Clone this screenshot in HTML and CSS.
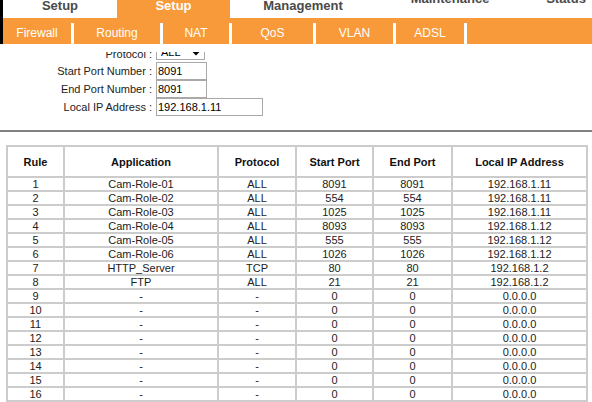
FILE: index.html
```html
<!DOCTYPE html>
<html lang="en">
<head>
  <meta charset="UTF-8" />
  <title>Virtual Server</title>
  <link rel="stylesheet" href="styles.css">
</head>
<body>

  <!-- top navigation -->
  <div class="header">
    <div class="nav">
      <div class="topnav">
        <div class="tab t1">Setup</div>
        <div class="tab t2 active">Setup</div>
        <div class="tab t3">Management</div>
        <div class="tab t4 high">Maintenance</div>
        <div class="tab t5 high">Status</div>
      </div>
      <div class="subnav">
        <a class="sub s1">Firewall</a>
        <a class="sub s2">Routing</a>
        <a class="sub s3">NAT</a>
        <a class="sub s4">QoS</a>
        <a class="sub s5">VLAN</a>
        <a class="sub s6">ADSL</a>
      </div>
    </div>
  </div>

  <!-- rule form -->
  <div class="form">
    <div class="row first">
      <label>Protocol :</label>
      <select class="sel"><option>ALL</option></select>
    </div>
    <div class="row">
      <label>Start Port Number :</label>
      <input class="field short" type="text" value="8091">
    </div>
    <div class="row">
      <label>End Port Number :</label>
      <input class="field short" type="text" value="8091">
    </div>
    <div class="row">
      <label>Local IP Address :</label>
      <input class="field long" type="text" value="192.168.1.11">
    </div>
  </div>

  <hr class="divider">

  <!-- rule list -->
  <table class="rules">
    <colgroup>
      <col style="width:57px"><col style="width:154px"><col style="width:78px">
      <col style="width:77px"><col style="width:79px"><col style="width:135px">
    </colgroup>
    <tr>
      <th>Rule</th><th>Application</th><th>Protocol</th><th>Start Port</th><th>End Port</th><th>Local IP Address</th>
    </tr>
    <tr><td>1</td><td>Cam-Role-01</td><td>ALL</td><td>8091</td><td>8091</td><td>192.168.1.11</td></tr>
    <tr><td>2</td><td>Cam-Role-02</td><td>ALL</td><td>554</td><td>554</td><td>192.168.1.11</td></tr>
    <tr><td>3</td><td>Cam-Role-03</td><td>ALL</td><td>1025</td><td>1025</td><td>192.168.1.11</td></tr>
    <tr><td>4</td><td>Cam-Role-04</td><td>ALL</td><td>8093</td><td>8093</td><td>192.168.1.12</td></tr>
    <tr><td>5</td><td>Cam-Role-05</td><td>ALL</td><td>555</td><td>555</td><td>192.168.1.12</td></tr>
    <tr><td>6</td><td>Cam-Role-06</td><td>ALL</td><td>1026</td><td>1026</td><td>192.168.1.12</td></tr>
    <tr><td>7</td><td>HTTP_Server</td><td>TCP</td><td>80</td><td>80</td><td>192.168.1.2</td></tr>
    <tr><td>8</td><td>FTP</td><td>ALL</td><td>21</td><td>21</td><td>192.168.1.2</td></tr>
    <tr><td>9</td><td>-</td><td>-</td><td>0</td><td>0</td><td>0.0.0.0</td></tr>
    <tr><td>10</td><td>-</td><td>-</td><td>0</td><td>0</td><td>0.0.0.0</td></tr>
    <tr><td>11</td><td>-</td><td>-</td><td>0</td><td>0</td><td>0.0.0.0</td></tr>
    <tr><td>12</td><td>-</td><td>-</td><td>0</td><td>0</td><td>0.0.0.0</td></tr>
    <tr><td>13</td><td>-</td><td>-</td><td>0</td><td>0</td><td>0.0.0.0</td></tr>
    <tr><td>14</td><td>-</td><td>-</td><td>0</td><td>0</td><td>0.0.0.0</td></tr>
    <tr><td>15</td><td>-</td><td>-</td><td>0</td><td>0</td><td>0.0.0.0</td></tr>
    <tr><td>16</td><td>-</td><td>-</td><td>0</td><td>0</td><td>0.0.0.0</td></tr>
  </table>

</body>
</html>
```

FILE: styles.css
```css
html, body {
  margin: 0;
  padding: 0;
  background: #fff;
  font-family: 'Liberation Sans', Arial, sans-serif;
  overflow: hidden;
}

/* header */
.header {
  padding-bottom: 8px;
  background: #fff;
}

.nav {
  border-left: 3px solid #000;
}

.topnav {
  display: flex;
  height: 18px;
  overflow: hidden;
}

.tab {
  flex-shrink: 0;
  height: 18px;
  line-height: 11px;
  text-align: center;
  font-size: 13px;
  font-weight: bold;
  color: #4a4a4a;
}

.tab.active {
  background: #f89a3a;
  color: #fff;
}

.tab.high {
  margin-top: -7px;
}

.t1 { width: 114px; }
.t2 { width: 113px; }
.t3 { width: 146px; }
.t4 { width: 148px; }
.t5 { width: 84px; }

.subnav {
  display: flex;
  height: 26px;
  padding-top: 5px;
  box-sizing: border-box;
  background: #f89a3a;
}

.sub {
  height: 21px;
  line-height: 21px;
  text-align: center;
  font-size: 12px;
  color: #fff;
  border-right: 3px solid #fff;
}

.s1 { width: 68px; }
.s2 { width: 86px; }
.s3 { width: 66px; }
.s4 { width: 81px; }
.s5 { width: 77px; }
.s6 { width: 68px; }

/* form */
.form {
  overflow: hidden;
}

.row {
  display: grid;
  grid-template-columns: 152px auto;
  column-gap: 4px;
  align-items: center;
  height: 18px;
  font-size: 11px;
  color: #222;
}

.row.first {
  margin-top: -8px;
}

.row label {
  text-align: right;
}

.sel {
  width: 49px;
  height: 16px;
  margin-bottom: 3px;
  padding: 0;
  font-size: 11px;
  font-family: 'Liberation Sans', Arial, sans-serif;
  border: 1px solid #a9a9a9;
  background: #fff;
}

.field {
  height: 18px;
  box-sizing: border-box;
  margin: 0;
  padding: 0 1px;
  border: 1px solid #a9a9a9;
  font-size: 11px;
  font-family: 'Liberation Sans', Arial, sans-serif;
  color: #000;
}

.field.short { width: 51px; }
.field.long { width: 107px; }

.divider {
  margin: 14px 0 0;
  border: 0;
  height: 2px;
  background: #808080;
}

/* table */
.rules {
  margin: 13px 0 0 6px;
  width: 580px;
  table-layout: fixed;
  border-collapse: collapse;
  font-size: 11px;
  color: #222;
}

.rules th,
.rules td {
  border: 2px solid #cccccc;
  padding: 0;
  text-align: center;
}

.rules th {
  height: 29px;
  font-weight: bold;
  color: #111;
}

.rules td {
  height: 12px;
  line-height: 12px;
}
```
